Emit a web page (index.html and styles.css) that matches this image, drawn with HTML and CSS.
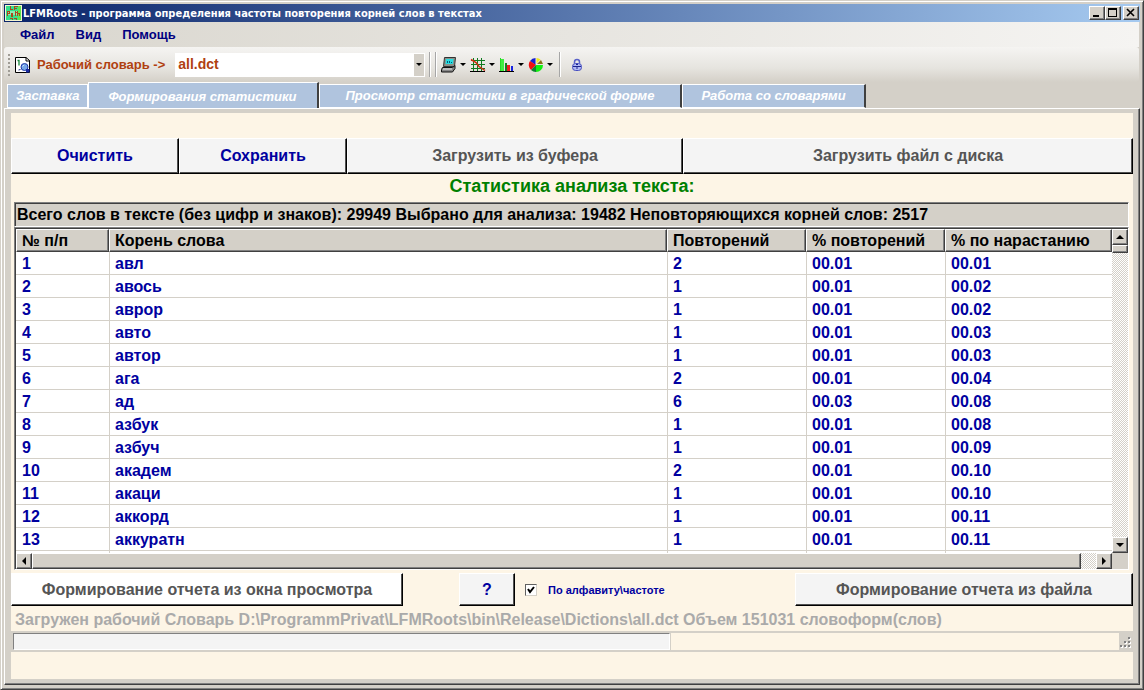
FILE: index.html
```html
<!DOCTYPE html>
<html lang="ru">
<head>
<meta charset="utf-8">
<title>LFMRoots</title>
<link rel="stylesheet" href="styles.css">
</head>
<body>
<div class="window">
  <header class="titlebar">
    <svg class="app-icon" width="17" height="16" viewBox="0 0 17 16" shape-rendering="crispEdges" aria-hidden="true">
      <rect width="17" height="16" fill="#f4f4d0"/><rect x="1" y="1" width="15" height="14" fill="#35e08a"/>
      <rect x="2" y="6" width="12" height="4" fill="#8aeab0"/><rect x="13" y="1" width="3" height="14" fill="#5ce84c"/>
      <path d="M5.500 1v3.500h2M9.500 5V1.500h3M9.500 3.500h2M2.500 11V6.500h2v2H2.500M6.500 8.500h1v2.500h-1zM10.500 6v5M9.500 7.500h2M12.500 6v5M12.500 8.500h2v2.500M5 13.500h2v1M9 13.500h2v1" fill="none" stroke="#a84818"/>
    </svg>
    <h1 class="title">LFMRoots - программа определения частоты повторения корней слов в текстах</h1>
    <div class="caption-buttons">
      <button class="cap" aria-label="Свернуть"><svg width="12" height="10" viewBox="0 0 12 10"><path d="M2 8h6" stroke="#000" stroke-width="2"/></svg></button>
      <button class="cap" aria-label="Развернуть"><svg width="12" height="10" viewBox="0 0 12 10" shape-rendering="crispEdges"><path d="M1 0h9v9H1zM2 2h7v6H2z" fill-rule="evenodd"/></svg></button>
      <button class="cap cap-close" aria-label="Закрыть"><svg width="12" height="10" viewBox="0 0 12 10"><path d="M2 1l7 7M9 1l-7 7" stroke="#000" stroke-width="1.600"/></svg></button>
    </div>
  </header>

  <nav class="menu">
    <button>Файл</button>
    <button>Вид</button>
    <button>Помощь</button>
  </nav>

  <div class="toolbar">
    <span class="grip"></span>
    <svg class="dict-icon" width="16" height="16" viewBox="0 0 16 16" aria-hidden="true">
      <path d="M.5.500h10.500l3.500 3v12H.5z" fill="#fff" stroke="#000"/><path d="M11 .5v3.500h4" fill="none" stroke="#000"/>
      <path d="M2.500 3.500h1.500v5" fill="none" stroke="#18883c" stroke-width="1.300"/>
      <circle cx="9.500" cy="10" r="3.500" fill="#78a8e8" stroke="#2038a8"/><path d="M7.500 9.500l1.500-1.500" stroke="#d0e8ff"/><path d="M11 12h3.500v3.500H11z" fill="#1828a0"/><path d="M5.500 12.500l-2 .5" fill="none" stroke="#182888"/>
    </svg>
    <label class="dict-label" for="dict">Рабочий словарь -&gt;</label>
    <span class="combo">
      <select id="dict"><option>all.dct</option></select>
      <span class="combo-arrow"><i class="tri down"></i></span>
    </span>
    <span class="sep"></span>
    <span class="sep"></span>
    <button class="tool" aria-label="Компьютер">
      <svg width="16" height="16" viewBox="0 0 16 16"><path d="M3.500.5h11l-1 9h-11z" fill="#8c9088" stroke="#333"/><path d="M5 2h7.500l-.6 5H4.500z" fill="#28dce0"/><path d="M6.500 4v2M8.500 4v2M10.500 5v1" stroke="#005878"/><path d="M1.500 10.500h10l2.500-2v3l-2.500 3.500H.5v-2.500z" fill="#888" stroke="#111"/><path d="M2 12h9" stroke="#eee"/></svg>
      <i class="tri down"></i>
    </button>
    <button class="tool" aria-label="Сетка">
      <svg width="16" height="16" viewBox="0 0 16 16"><path d="M1 3.500h14M1 7.500h14M1 11.500h14M3.500 1v13M7.500 1v13M11.500 1v13" stroke="#107c20"/><path d="M1 2.500l5 3 3 4 6 4" fill="none" stroke="#d02c10" stroke-width="1.500"/><path d="M0 14.500h15" stroke="#000"/></svg>
      <i class="tri down"></i>
    </button>
    <button class="tool" aria-label="Гистограмма">
      <svg width="16" height="16" viewBox="0 0 16 16" shape-rendering="crispEdges"><rect x="1" y="1" width="1" height="13" fill="#28d828"/><rect x="2" y="2" width="3" height="12" fill="#40ec40"/><rect x="6" y="6" width="2" height="8" fill="#108020"/><rect x="8" y="8" width="3" height="6" fill="#f01820"/><rect x="12" y="9" width="2" height="5" fill="#1824e0"/><rect y="14" width="15" height="1"/></svg>
      <i class="tri down"></i>
    </button>
    <button class="tool" aria-label="Диаграмма">
      <svg width="16" height="16" viewBox="0 0 16 16"><path d="M7.500 8V1a7 7 0 0 0-5.500 3z" fill="#1820d0"/><path d="M8 8L2 4a7 7 0 0 0 1 9z" fill="#f01010"/><path d="M8 8l-5 5a7 7 0 0 0 5 2z" fill="#108030"/><path d="M8 8v7a7 7 0 0 0 7-7z" fill="#10f010"/><path d="M8.500 6.500V1a7 7 0 0 1 4 1.500z" fill="#f0e820"/><path d="M9 7l4-4 2 4z" fill="#887018"/></svg>
      <i class="tri down"></i>
    </button>
    <span class="sep"></span>
    <button class="tool lock" aria-label="Защита">
      <svg width="12" height="14" viewBox="0 0 12 14"><path d="M3.500 5.500V4a2.500 2.500 0 0 1 5 0v1.500" fill="none" stroke="#5860c8" stroke-width="1.500"/><rect x="1.500" y="5.500" width="9" height="7" rx="3" fill="#b0b8f4" stroke="#4850c0"/><path d="M2 8.500h8M5 6.500h2M6 9v2" stroke="#1c2490"/></svg>
    </button>
  </div>

  <div class="tabs" role="tablist">
    <button class="tab tab-first" role="tab">Заставка</button>
    <button class="tab active" role="tab" aria-selected="true">Формирования статистики</button>
    <button class="tab tab-wide" role="tab">Просмотр статистики в графической форме</button>
    <button class="tab" role="tab">Работа со словарями</button>
  </div>

  <div class="tabpage">
    <main class="page">
      <div class="actions">
        <button class="btn blue">Очистить</button>
        <button class="btn blue">Сохранить</button>
        <button class="btn">Загрузить из буфера</button>
        <button class="btn">Загрузить файл с диска</button>
      </div>
      <h2 class="caption">Статистика анализа текста:</h2>
      <p class="summary">Всего слов в тексте (без цифр и знаков): 29949 Выбрано для анализа: 19482 Неповторяющихся корней слов: 2517</p>

      <div class="grid">
        <div class="viewport">
          <table>
            <colgroup><col class="c-num"><col class="c-root"><col class="c-rep"><col class="c-rep"><col class="c-inc"></colgroup>
            <thead><tr><th>№ п/п</th><th>Корень слова</th><th>Повторений</th><th>% повторений</th><th>% по нарастанию</th></tr></thead>
            <tbody>
              <tr><td>1</td><td>авл</td><td>2</td><td>00.01</td><td>00.01</td></tr>
              <tr><td>2</td><td>авось</td><td>1</td><td>00.01</td><td>00.02</td></tr>
              <tr><td>3</td><td>аврор</td><td>1</td><td>00.01</td><td>00.02</td></tr>
              <tr><td>4</td><td>авто</td><td>1</td><td>00.01</td><td>00.03</td></tr>
              <tr><td>5</td><td>автор</td><td>1</td><td>00.01</td><td>00.03</td></tr>
              <tr><td>6</td><td>ага</td><td>2</td><td>00.01</td><td>00.04</td></tr>
              <tr><td>7</td><td>ад</td><td>6</td><td>00.03</td><td>00.08</td></tr>
              <tr><td>8</td><td>азбук</td><td>1</td><td>00.01</td><td>00.08</td></tr>
              <tr><td>9</td><td>азбуч</td><td>1</td><td>00.01</td><td>00.09</td></tr>
              <tr><td>10</td><td>академ</td><td>2</td><td>00.01</td><td>00.10</td></tr>
              <tr><td>11</td><td>акаци</td><td>1</td><td>00.01</td><td>00.10</td></tr>
              <tr><td>12</td><td>аккорд</td><td>1</td><td>00.01</td><td>00.11</td></tr>
              <tr><td>13</td><td>аккуратн</td><td>1</td><td>00.01</td><td>00.11</td></tr>
              <tr><td></td><td></td><td></td><td></td><td></td></tr>
            </tbody>
          </table>
        </div>
        <div class="vscroll">
          <button class="sb" aria-label="Вверх"><i class="tri up"></i></button>
          <span class="thumb v"></span>
          <span class="track"></span>
          <button class="sb" aria-label="Вниз"><i class="tri down big"></i></button>
        </div>
        <div class="hscroll">
          <button class="sb" aria-label="Влево"><i class="tri left"></i></button>
          <span class="thumb h"></span>
          <span class="track"></span>
          <button class="sb" aria-label="Вправо"><i class="tri right"></i></button>
        </div>
      </div>

      <div class="reports">
        <button class="btn white">Формирование отчета из окна просмотра</button>
        <button class="btn blue">?</button>
        <label class="sort"><input type="checkbox" checked>По алфавиту\частоте</label>
        <button class="btn">Формирование отчета из файла</button>
      </div>
      <p class="loaded">Загружен рабочий Словарь D:\ProgrammPrivat\LFMRoots\bin\Release\Dictions\all.dct Объем 151031 словоформ(слов)</p>
      <div class="status">
        <div class="progress" role="progressbar" aria-label="Ход анализа"></div>
        <div class="status-rest"></div>
        <svg class="size-grip" width="14" height="16" viewBox="0 0 14 16" shape-rendering="crispEdges" aria-hidden="true"><path d="M10 5h2v2h-2zM6 9h2v2H6zM10 9h2v2h-2zM2 13h2v2H2zM6 13h2v2H6zM10 13h2v2h-2z" fill="#fff"/><path d="M9 4h2v2H9zM5 8h2v2H5zM9 8h2v2H9zM1 12h2v2H1zM5 12h2v2H5zM9 12h2v2H9z" fill="#808080"/></svg>
      </div>
    </main>
  </div>
</div>
</body>
</html>
```
FILE: styles.css
```css
* { box-sizing: border-box; }

body {
  margin: 0;
  font-family: "Liberation Sans", Arial, sans-serif;
  font-weight: bold;
  background: #d4d0c8;
}

button, select, input { font: inherit; color: inherit; margin: 0; padding: 0; }
button { border: 0; background: none; }
h1, h2, p { margin: 0; font-weight: bold; white-space: nowrap; }

.window {
  height: 100vh;
  display: flex;
  flex-direction: column;
  padding: 2px 3px 4px 2px;
  background: #d4d0c8;
  border: 1px solid;
  border-color: #d4d0c8 #404040 #404040 #d4d0c8;
  box-shadow: inset 1px 1px #fff, inset -1px -1px #808080;
}

.titlebar {
  display: flex;
  align-items: center;
  height: 18px;
  margin: 1px 0 0 1px;
  padding: 0 1px;
  background: linear-gradient(90deg, #0a246a, #a6caf0);
}
.app-icon { margin-right: 1px; }
.title { flex: 1; color: #fff; font: bold 11px "DejaVu Sans Condensed", "DejaVu Sans", sans-serif; }
.caption-buttons { display: flex; }
.cap, .sb {
  display: flex;
  align-items: center;
  justify-content: center;
  background: #d4d0c8;
  border: 1px solid;
  border-color: #fff #404040 #404040 #fff;
  box-shadow: inset -1px -1px #808080;
}
.cap { width: 16px; height: 14px; }
.cap-close { margin-left: 2px; }

.menu {
  display: flex;
  gap: 21px;
  height: 25px;
  margin: 0 1px;
  padding: 0 16px;
  color: #000080;
  font-size: 13px;
  background: linear-gradient(90deg, #d9d6ce, #f5f4f2);
}

.toolbar {
  display: flex;
  align-items: center;
  height: 35px;
  margin: 0 1px;
  padding: 0 4px;
  color: #b04010;
  font-size: 13px;
  background: linear-gradient(#f5f4f2, #e6e4df 60%, #d4d0c8);
  border-radius: 3px;
}
.grip {
  width: 2px;
  height: 22px;
  margin-right: 5px;
  background: repeating-linear-gradient(#a09d96 0 2px, transparent 2px 4px);
}
.dict-label { margin: 0 10px 0 6px; white-space: nowrap; }
.combo { position: relative; display: block; width: 250px; height: 24px; background: #fff; font-size: 14px; }
.combo select {
  width: 100%;
  height: 24px;
  padding: 0 3px 2px;
  appearance: none;
  border: 0;
  background: #fff;
}
.combo-arrow {
  position: absolute;
  inset: 1px 1px 1px auto;
  width: 10px;
  display: flex;
  align-items: center;
  justify-content: center;
  background: #d4d0c8;
  pointer-events: none;
}
.sep { width: 2px; height: 25px; margin-left: 4px; border-left: 1px solid #a6a6a6; border-right: 1px solid #fff; }
.tool { display: flex; align-items: center; gap: 3px; margin-left: 5px; }
.tool + .tool { margin-left: 4px; }
.sep + .tool { margin-left: 4px; }
.tool + .sep { margin-left: 6px; }
.sep + .lock { margin-left: 10px; }

.tri { display: block; width: 0; height: 0; border: 0 solid transparent; }
.tri.down { border-width: 3px 3px 0; border-top-color: #000; }
.tri.down.big { border-width: 4px 4px 0; }
.tri.up { border-width: 0 4px 4px; border-bottom-color: #000; }
.tri.left { border-width: 4px 4px 4px 0; border-right-color: #000; }
.tri.right { border-width: 4px 0 4px 4px; border-left-color: #000; }

.tabs { display: flex; align-items: flex-end; height: 26px; padding: 0 4px; }
.tab {
  height: 24px;
  padding: 0 18px 2px;
  color: #fff;
  font-size: 13px;
  font-style: italic;
  white-space: nowrap;
  background: #b0c4de;
  border: 1px solid #fff;
  border-right: 2px solid #404040;
}
.tab.active { height: 26px; padding: 1px 20px 0 19px; border-bottom: 0; }
.tab-first { padding: 0 8px 2px; border-right: 1px solid #fff; }
.tab-wide { padding: 0 26px 2px; }

.tabpage {
  flex: 1;
  min-height: 0;
  display: flex;
  margin: 0 0 0 1px;
  padding: 4px 6px 5px 6px;
  border: 1px solid;
  border-color: #fff #404040 #404040 #fff;
  box-shadow: inset -1px -1px #808080;
}
.page {
  flex: 1;
  min-width: 0;
  display: flex;
  flex-direction: column;
  padding: 25px 0 27px;
  background: #fdf5e6;
}

.btn {
  color: #555;
  font-size: 16px;
  white-space: nowrap;
  background: #f4f4f4;
  border: 1px solid;
  border-color: #fff #000 #000 #fff;
  box-shadow: inset -1px -1px #505050;
}
.btn.blue { color: #0000a0; }
.btn.white { background: #fff; }

.actions { display: grid; grid-template-columns: 168fr 168fr 336fr 450fr; grid-auto-rows: 36px; }
.caption { height: 28px; color: #008000; font-size: 18px; line-height: 24px; text-align: center; }

.summary {
  height: 25px;
  margin: 0 4px 0 3px;
  padding: 0 2px;
  overflow: hidden;
  font-size: 16px;
  line-height: 24px;
  background: #d4d0c8;
  border: 1px solid;
  border-color: #808080 #fff #fff #808080;
  box-shadow: inset 1px 1px #404040;
}

.grid {
  flex: 1;
  min-height: 0;
  display: grid;
  grid-template: minmax(0, 1fr) 16px / minmax(0, 1fr) 16px;
  margin: 0 4px 3px 3px;
  padding: 1px 0 0 1px;
  background: #d4d0c8;
  border: 1px solid;
  border-color: #808080 #fff #fff #808080;
  box-shadow: inset 1px 1px #404040;
}
.viewport { overflow: hidden; background: #fff; }
table { width: 100%; table-layout: fixed; border-collapse: separate; border-spacing: 0; font-size: 16px; }
.c-num { width: 93px; }
.c-rep { width: 139px; }
.c-inc { width: 167px; }
th, td { height: 23px; padding: 0 6px; line-height: 20px; text-align: left; white-space: nowrap; }
th {
  background: #d4d0c8;
  border: 1px solid;
  border-color: #fff #404040 #404040 #fff;
  box-shadow: inset -1px -1px #808080;
  padding: 0 5px;
}
td { padding-top: 2px; color: #0000a0; border-bottom: 1px solid #d4d0c8; }
td + td { border-left: 1px solid #d4d0c8; padding-left: 5px; }

.vscroll, .hscroll { display: flex; }
.vscroll { flex-direction: column; }
.sb { flex: none; width: 16px; height: 16px; }
.thumb {
  background: #d4d0c8;
  border: 1px solid;
  border-color: #fff #404040 #404040 #fff;
  box-shadow: inset -1px -1px #808080;
}
.thumb.v { height: 8px; }
.thumb.h { flex: 1049; }
.track { flex: 15; background: repeating-conic-gradient(#fff 0 25%, #d4d0c8 0 50%) 0 0 / 2px 2px; }

.reports { display: grid; grid-template-columns: 392fr 56fr 56fr 280fr 338fr; grid-template-rows: 33px; }
.reports .btn:nth-child(2) { grid-column: 3; }
.reports .sort { grid-column: 4; }
.sort {
  display: flex;
  align-items: center;
  gap: 11px;
  padding-left: 10px;
  color: #0000a0;
  font-size: 11px;
}
.sort input {
  appearance: none;
  width: 12px;
  height: 12px;
  background: #fff url("data:image/svg+xml,%3Csvg xmlns='http://www.w3.org/2000/svg' viewBox='0 0 10 10'%3E%3Cpath d='M2 4l2 3 4-5' fill='none' stroke='black' stroke-width='2'/%3E%3C/svg%3E");
  border: 1px solid;
  border-color: #606060 #d4d0c8 #d4d0c8 #606060;
}

.loaded { height: 25px; padding-left: 4px; overflow: hidden; color: #aaa; font-size: 16px; line-height: 28px; }

.status {
  display: flex;
  height: 21px;
  background: #d4d0c8;
  padding: 2px 0 2px 2px;
}
.progress {
  flex: 656;
  background: #f4f4f4;
  border: 1px solid;
  border-color: #808080 #fff #fff #808080;
}
.status-rest { flex: 449; margin-left: 1px; background: #fdf5e6; }
.size-grip { flex: none; }
```
